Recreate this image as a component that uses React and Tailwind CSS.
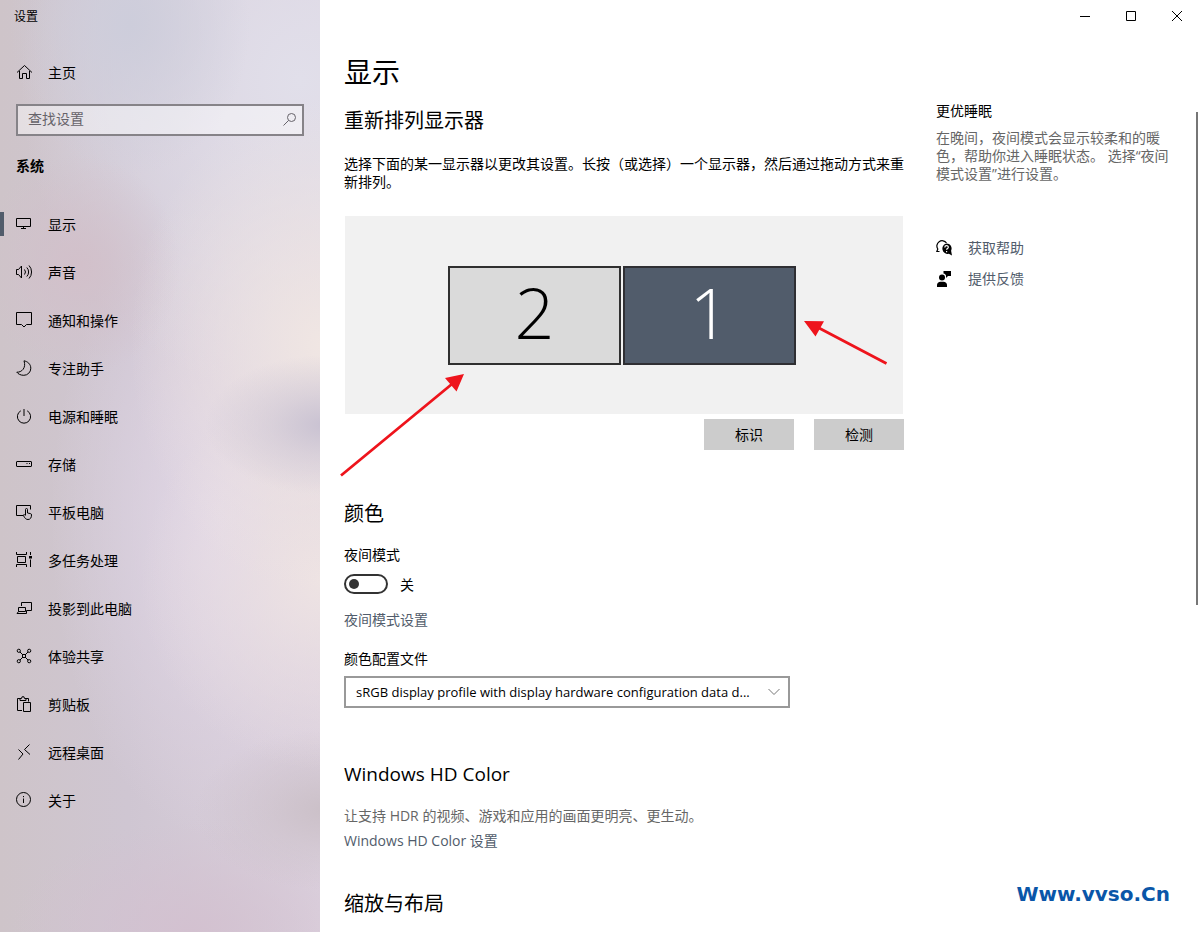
import { useState } from "react";

const icons = {
  home: (
    <path d="M1 8.5 8.5 1.5 16 8.5M3.5 7v7.5h3v-5h4v5h3V7" />
  ),
  display: <path d="M.5 2.5h14v8H.5zM7.5 10.5v2M5 12.5h5" />,
  sound: (
    <path d="M.5 5.5h2L5.5 2v12l-3-3.5h-2zM8.5 5.5a4 4 0 0 1 0 5M10.8 3.5a6.5 6.5 0 0 1 0 9M13 1.5a9.5 9.5 0 0 1 0 13" />
  ),
  notice: <path d="M.5 .5h15v12h-5L8 15l-2.500-2.500h-5z" />,
  moon: (
    <path d="M8 .8C11.500 1.500 14.800 4 14.800 8.200a7 7 0 0 1-7 7.100C4.500 15.300 2.200 14 .8 12.200 5.500 12.500 10.500 8 8 .8z" />
  ),
  power: <path d="M4.800 2.800a6.600 6.600 0 1 0 6.400 0M8 1v7" />,
  storage: (
    <>
      <rect x=".5" y="5.5" width="15" height="5" rx=".5" />
      <path d="M10.500 7.500h1M13 7.500h1" />
    </>
  ),
  tablet: (
    <>
      <path d="M7 11.500H.5v-10h14v4" />
      <path d="M9.500 11V5.500a1 1 0 0 1 2 0V9l3 .6c.8.2 1 .6 1 1.400 0 2.500-1 4.500-3.500 4.500-2 0-3-1-4.800-4.300.8-.8 1.500-.6 2.300.3" />
    </>
  ),
  tasks: (
    <>
      <path d="M.5 0v2.500h10V0M.5 15v-2.500h10V15M1.500 4.500h8v6h-8zM14.500 0v3M14.500 7.500V15" />
      <rect x="13.500" y="4.500" width="2" height="1.500" fill="currentColor" />
    </>
  ),
  project: (
    <path d="M5.500 6V2.500h10v8h-5M2.500 7.500h7v4h-7zM2.500 11.500l-1.500 2h9.500v-3" />
  ),
  share: (
    <>
      <circle cx="2.800" cy="2.800" r="1.600" />
      <circle cx="13.200" cy="2.800" r="1.600" />
      <circle cx="2.800" cy="13.200" r="1.600" />
      <circle cx="13.200" cy="13.200" r="1.600" />
      <path d="M4 4l2.500 2.500M12 4L9.500 6.500M4 12l2.500-2.500M12 12L9.500 9.500" />
      <rect x="6.500" y="6.500" width="3" height="3" />
    </>
  ),
  clipboard: (
    <>
      <path d="M6 14.500H1.500v-12H4M10 2.500h2.500v3" />
      <path d="M4 4.500v-2h1.500L6 .8h2l.5 1.700H10v2zM7.500 6.500h7v9h-7z" />
    </>
  ),
  remote: <path d="M2.500 5.500l4.500 4.500-4.500 5.500M13.500 .5L8.500 5.500l5.500 5" />,
  about: (
    <>
      <circle cx="7.500" cy="7.500" r="7" />
      <path d="M7.500 6.500V11M7.500 4v1.200" />
    </>
  ),
};

const navItems = [
  { icon: "display", label: "显示" },
  { icon: "sound", label: "声音" },
  { icon: "notice", label: "通知和操作" },
  { icon: "moon", label: "专注助手" },
  { icon: "power", label: "电源和睡眠" },
  { icon: "storage", label: "存储" },
  { icon: "tablet", label: "平板电脑" },
  { icon: "tasks", label: "多任务处理" },
  { icon: "project", label: "投影到此电脑" },
  { icon: "share", label: "体验共享" },
  { icon: "clipboard", label: "剪贴板" },
  { icon: "remote", label: "远程桌面" },
  { icon: "about", label: "关于" },
];

function Icon({ name }) {
  return (
    <svg
      viewBox="0 0 16 16"
      className="w-4 h-4 shrink-0 overflow-visible"
      fill="none"
      stroke="currentColor"
      aria-hidden="true"
    >
      {icons[name]}
    </svg>
  );
}

function Sidebar({ active, onSelect }) {
  const [query, setQuery] = useState("");

  return (
    <aside className="w-80 shrink-0 bg-[#d9d0dc] bg-[radial-gradient(ellipse_120px_70px_at_325px_425px,#c9c2d2_0%,#c9c2d280_45%,transparent_100%),radial-gradient(ellipse_190px_250px_at_320px_345px,#f0e6e3_0%,#f0e6e380_50%,transparent_100%),radial-gradient(ellipse_180px_190px_at_320px_580px,#eee3e3_0%,#eee3e380_45%,transparent_100%),radial-gradient(ellipse_130px_80px_at_325px_810px,#cbc0c8_0%,#cbc0c880_45%,transparent_100%),radial-gradient(ellipse_180px_110px_at_190px_932px,#d3c1d0_0%,#d3c1d080_50%,transparent_100%),radial-gradient(ellipse_100px_110px_at_80px_265px,#d2c0ca_0%,#d2c0ca80_50%,transparent_100%),radial-gradient(ellipse_120px_150px_at_130px_25px,#cdcddb_0%,#cdcddb80_50%,transparent_100%),radial-gradient(ellipse_280px_320px_at_300px_80px,#e1dfea_0%,#e1dfea80_60%,transparent_100%),radial-gradient(ellipse_170px_320px_at_220px_520px,#e1d7e6_0%,#e1d7e680_50%,transparent_100%),linear-gradient(90deg,#cec4c9_0%,#cfc6d2_40%,#dbd0dd_100%)]">
      <div className="px-3.5 pt-0.5 h-8 flex items-center text-xs">设置</div>

      <a href="#home" className="mt-6 px-4 h-8 flex items-center gap-4">
        <Icon name="home" />
        <span className="pt-0.5">主页</span>
      </a>

      {/* Search */}
      <div className="relative mx-4 mt-4">
        <input
          type="text"
          aria-label="查找设置"
          placeholder="查找设置"
          value={query}
          onChange={(e) => setQuery(e.target.value)}
          className="block w-full h-8 pl-2.5 pr-8 pb-1 border-2 border-[#868388] bg-white/45 placeholder:text-[#66636a] focus:outline-none"
        />
        <svg
          viewBox="0 0 16 16"
          className="absolute right-1.5 top-2 w-4 h-4 text-[#66636a]"
          fill="none"
          stroke="currentColor"
          aria-hidden="true"
        >
          <circle cx="9.500" cy="5.500" r="4" />
          <path d="M6.500 8.500L1.500 13.500" />
        </svg>
      </div>

      <h2 className="mt-5 px-4 leading-5 font-bold">系统</h2>

      <nav className="mt-6">
        {navItems.map((item) => (
          <a
            key={item.icon}
            href={`#${item.icon}`}
            onClick={() => onSelect(item.icon)}
            className="relative h-12 px-4 flex items-center gap-4"
          >
            {active === item.icon && (
              <span className="absolute left-0 top-3 w-1 h-6 bg-[#515c6b]" />
            )}
            <Icon name={item.icon} />
            <span className="pt-0.5">{item.label}</span>
          </a>
        ))}
      </nav>
    </aside>
  );
}

function WindowButtons() {
  return (
    <div className="flex justify-end h-8">
      <button aria-label="最小化" className="w-[46px] flex items-center justify-center">
        <svg viewBox="0 0 10 10" className="w-2.5 h-2.5" stroke="black">
          <path d="M0 5.500h10" />
        </svg>
      </button>
      <button aria-label="最大化" className="w-[46px] flex items-center justify-center">
        <svg viewBox="0 0 10 10" className="w-2.5 h-2.5" fill="none" stroke="black">
          <path d="M.5 .5h9v9h-9z" />
        </svg>
      </button>
      <button aria-label="关闭" className="w-[46px] flex items-center justify-center">
        <svg viewBox="0 0 10 10" className="w-2.5 h-2.5" stroke="black">
          <path d="M0 0l10 10M10 0L0 10" />
        </svg>
      </button>
    </div>
  );
}

function Monitors() {
  return (
    <div className="relative mt-[25px]">
      <div className="mx-px h-[198px] pr-1 flex items-center justify-center gap-0.5 bg-[#f1f1f1]">
        <button className="w-[173px] h-[99px] pb-1.5 border-2 border-[#2f2f2f] bg-[#dadada] text-[70px] leading-none font-light">
          2
        </button>
        <button className="w-[173px] h-[99px] pb-1.5 border-2 border-[#2f2f33] bg-[#515c6b] text-white text-[70px] leading-none font-light">
          1
        </button>
      </div>

      {/* Red arrows */}
      <svg
        className="absolute inset-0 w-full h-full overflow-visible pointer-events-none"
        fill="#ee141c"
        stroke="#ee141c"
        aria-hidden="true"
      >
        <path d="M-3 259.500L108 168M542.500 147.500L475 112" strokeWidth="2.800" />
        <path
          d="M120 158l-19 4 11.500 13.500zM460 105l20 .3-8.500 15.200z"
          stroke="none"
        />
      </svg>
    </div>
  );
}

function SidePanel() {
  return (
    <div className="w-[236px] shrink-0 mt-[69px]">
      <h3 className="leading-5">更优睡眠</h3>
      <p className="mt-2 leading-[18px] text-[#666666]">
        在晚间，夜间模式会显示较柔和的暖色，帮助你进入睡眠状态。 选择“夜间模式设置”进行设置。
      </p>

      <a href="#help" className="mt-[55px] h-5 flex items-center gap-4 text-[#515c6b]">
        <svg viewBox="0 0 16 16" className="w-4 h-4 text-black" aria-hidden="true">
          <path
            d="M3.500 11.500H.8l1-2.500A5 5 0 1 1 10.500 3"
            fill="none"
            stroke="currentColor"
            strokeWidth="1.200"
          />
          <path
            d="M10.500 3.500a5 5 0 0 1 4.600 7.200L16 15.500l-3.200-1.700A5.200 5.200 0 1 1 10.500 3.500z"
            fill="currentColor"
          />
          <path
            d="M8.800 7.400c0-2.300 3.500-2.200 3.500-.2 0 1.300-1.700 1.300-1.700 2.600M10.600 11v1.200"
            fill="none"
            stroke="white"
            strokeWidth="1.200"
          />
        </svg>
        获取帮助
      </a>
      <a href="#feedback" className="mt-[11px] h-5 flex items-center gap-4 text-[#515c6b]">
        <svg viewBox="0 0 16 16" className="w-4 h-4 text-black" fill="currentColor" aria-hidden="true">
          <circle cx="6" cy="6.500" r="3" />
          <path d="M1 16v-2c0-2 1.500-3.300 3.500-3.300h3c2 0 3.500 1.300 3.500 3.300v2z" />
          <path d="M7.500 0H15v5h-3l-2 2V4.500C9.500 3.300 8.700 2.700 7.500 2.500z" />
        </svg>
        提供反馈
      </a>
    </div>
  );
}

function App() {
  const [active, setActive] = useState("display");
  const [nightLight, setNightLight] = useState(false);

  return (
    <div className="flex min-h-screen bg-white text-black text-sm font-['Open_Sans','Noto_Sans_CJK_SC',sans-serif]">
      <Sidebar active={active} onSelect={setActive} />

      <main className="relative flex-1 min-w-0">
        <WindowButtons />

        <div className="pl-6 pr-7 flex gap-8">
          <div className="flex-1 min-w-0 max-w-[560px] pb-3">
            <h1 className="mt-5 text-[28px] leading-10">显示</h1>
            <h2 className="mt-[15px] text-xl leading-7">重新排列显示器</h2>
            <p className="mt-5 leading-[18px]">
              选择下面的某一显示器以更改其设置。长按（或选择）一个显示器，然后通过拖动方式来重新排列。
            </p>

            <Monitors />

            <div className="mt-[5px] flex justify-end gap-5">
              <button className="w-[90px] h-[31px] bg-[#cccccc]">标识</button>
              <button className="w-[90px] h-[31px] bg-[#cccccc]">检测</button>
            </div>

            {/* Color */}
            <h2 className="mt-[50px] text-xl leading-7">颜色</h2>
            <label htmlFor="night" className="block mt-[17px] leading-5">
              夜间模式
            </label>
            <div className="mt-[9px] h-5 flex items-center gap-3">
              <input
                id="night"
                type="checkbox"
                role="switch"
                checked={nightLight}
                onChange={(e) => setNightLight(e.target.checked)}
                className="appearance-none w-11 h-5 px-[3px] flex items-center border-2 border-[#333333] rounded-full before:block before:w-2.5 before:h-2.5 before:rounded-full before:bg-[#333333] checked:justify-end"
              />
              <span className="pt-0.5">{nightLight ? "开" : "关"}</span>
            </div>
            <a href="#night" className="block mt-4 leading-5 text-[#515c6b]">
              夜间模式设置
            </a>

            <label htmlFor="profile" className="block mt-[19px] leading-5">
              颜色配置文件
            </label>
            <div className="relative mt-[7px] max-w-[446px]">
              <select
                id="profile"
                className="block appearance-none w-full h-8 pl-2.5 pr-6 border-2 border-[#999999] bg-white text-[13px]"
              >
                <option>sRGB display profile with display hardware configuration data d...</option>
              </select>
              <svg
                viewBox="0 0 12 8"
                className="absolute right-2.5 top-3 w-3 h-2 pointer-events-none"
                fill="none"
                stroke="#777777"
                aria-hidden="true"
              >
                <path d="M.5 1L6 6.500 11.500 1" />
              </svg>
            </div>

            {/* HDR */}
            <h2 className="mt-[52px] text-[19px] leading-7">Windows HD Color</h2>
            <p className="mt-[18px] leading-5 text-[#666666]">
              让支持 HDR 的视频、游戏和应用的画面更明亮、更生动。
            </p>
            <a href="#hdr" className="block mt-[5px] leading-5 text-[#515c6b]">
              Windows HD Color 设置
            </a>

            <h2 className="mt-[39px] text-xl leading-7">缩放与布局</h2>
          </div>

          <SidePanel />
        </div>

        {/* Scrollbar thumb */}
        <div className="absolute right-0.5 top-28 w-0.5 h-[493px] bg-[#767676]" />

        <div className="absolute right-[30px] bottom-6 text-xl font-bold text-[#0a56a8] font-['DejaVu_Sans',sans-serif]">
          Www.vvso.Cn
        </div>
      </main>
    </div>
  );
}

export default App;
